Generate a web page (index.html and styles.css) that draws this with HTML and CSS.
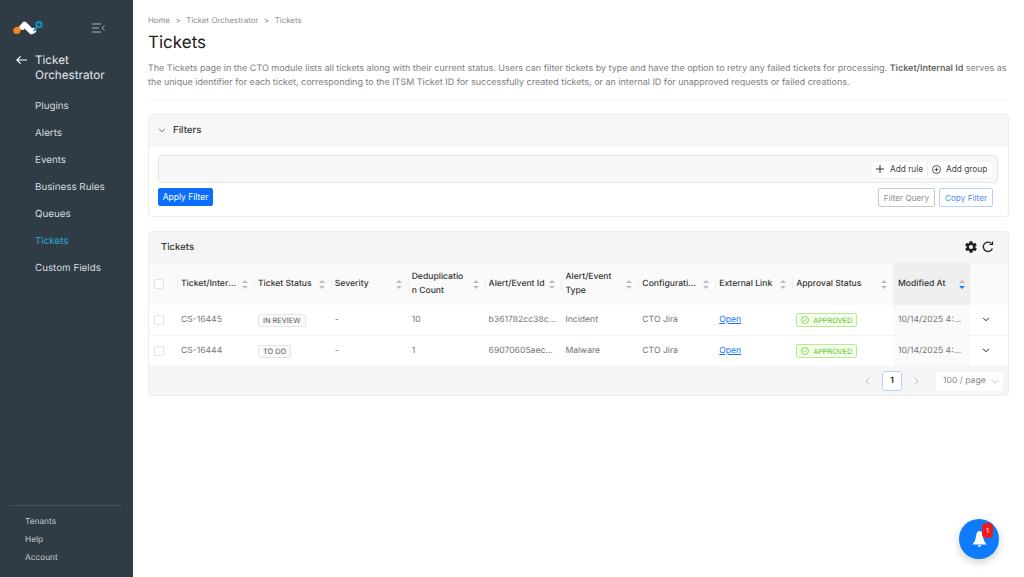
FILE: index.html
```html
<!DOCTYPE html>
<html>
  <head>
    <link rel="stylesheet" href="styles.css">
  </head>
  <body>
    <div class="container">
      <aside class="sidebar">
        <div class="brand">
          <svg class="logo" width="30" height="16" viewBox="0 0 30 16">
            <circle cx="3.800" cy="10.500" r="3.500" fill="#f5861f"/>
            <path d="M3.800 10.500 L8.500 7" stroke="#f5861f" stroke-width="4.500" stroke-linecap="round"/>
            <path d="M9.500 7 L11.500 4.500 L18.500 11.500 L20.500 10.500" fill="none" stroke="#fff" stroke-width="5.500" stroke-linecap="round" stroke-linejoin="round"/>
            <path d="M21 11 L24 7" stroke="#1494c4" stroke-width="2"/>
            <circle cx="26" cy="4.500" r="2.600" fill="none" stroke="#1494c4" stroke-width="2"/>
          </svg>
          <svg class="collapse" width="13" height="10" viewBox="0 0 13 10" fill="none" stroke="#aab2b8" stroke-width="1">
            <path d="M0 1h9M0 5h7M0 9h9M12.500 2.500 10 5l2.500 2.500"/>
          </svg>
        </div>
        <div class="module">
          <svg width="11" height="10" viewBox="0 0 12 10" fill="none" stroke="#fff" stroke-width="1.300">
            <path d="M12 5H1M5 1 1 5l4 4"/>
          </svg>
          <span>Ticket Orchestrator</span>
        </div>
        <nav class="menu">
          <a>Plugins</a>
          <a>Alerts</a>
          <a>Events</a>
          <a>Business Rules</a>
          <a>Queues</a>
          <a class="active">Tickets</a>
          <a>Custom Fields</a>
        </nav>
        <div class="side-bottom">
          <a>Tenants</a>
          <a>Help</a>
          <a>Account</a>
        </div>
      </aside>

      <main class="content">
        <div class="breadcrumb">
          <span>Home</span><i>&gt;</i><span>Ticket Orchestrator</span><i>&gt;</i><span>Tickets</span>
        </div>
        <h1>Tickets</h1>
        <p class="intro">The Tickets page in the CTO module lists all tickets along with their current status. Users can filter tickets by type and have the option to retry any failed tickets for processing. <b>Ticket/Internal Id</b> serves as the unique identifier for each ticket, corresponding to the ITSM Ticket ID for successfully created tickets, or an internal ID for unapproved requests or failed creations.</p>

        <section class="card filters">
          <div class="card-head">
            <svg width="8" height="5" viewBox="0 0 9 6" fill="none" stroke="#555" stroke-width="1"><path d="M1 1l3.500 3.500L8 1"/></svg>
            <span>Filters</span>
          </div>
          <div class="filter-body">
            <div class="builder">
              <div class="builder-actions">
                <button class="add-rule">
                  <svg width="8" height="8" viewBox="0 0 8 8" stroke="#333" stroke-width="1"><path d="M4 0v8M0 4h8"/></svg>
                  Add rule
                </button>
                <button class="add-group">
                  <svg width="9" height="9" viewBox="0 0 9 9" fill="none" stroke="#333" stroke-width="0.800"><circle cx="4.500" cy="4.500" r="4"/><path d="M4.500 2.500v4M2.500 4.500h4"/></svg>
                  Add group
                </button>
              </div>
            </div>
            <div class="filter-row">
              <button class="btn-primary">Apply Filter</button>
              <div class="filter-btns">
                <button class="btn-muted">Filter Query</button>
                <button class="btn-link">Copy Filter</button>
              </div>
            </div>
          </div>
        </section>

        <section class="card tickets">
          <div class="card-head tickets-head">
            <span>Tickets</span>
            <div class="tools">
              <svg width="14" height="14" viewBox="0 0 24 24" fill="#222"><path d="M19.400 13c.1-.3.100-.7.100-1s0-.7-.1-1l2.100-1.600c.2-.2.300-.4.100-.7l-2-3.400c-.1-.2-.4-.3-.6-.2l-2.500 1c-.5-.4-1.100-.7-1.700-1l-.4-2.600c0-.3-.2-.5-.5-.5h-4c-.3 0-.5.200-.5.500l-.4 2.600c-.6.300-1.200.6-1.700 1l-2.500-1c-.2-.1-.5 0-.6.200l-2 3.400c-.2.300-.1.500.1.700L4.600 11c0 .3-.1.700-.1 1s0 .7.100 1l-2.100 1.600c-.2.200-.3.400-.1.700l2 3.400c.1.200.4.300.6.200l2.500-1c.5.400 1.100.7 1.700 1l.4 2.600c0 .3.200.5.500.5h4c.3 0 .5-.2.500-.5l.4-2.600c.6-.3 1.200-.6 1.700-1l2.500 1c.2.100.5 0 .6-.2l2-3.400c.2-.3.100-.5-.1-.7zM12 15.500a3.500 3.500 0 1 1 0-7 3.500 3.500 0 0 1 0 7z"/></svg>
              <svg width="12" height="12" viewBox="0 0 12 12" fill="none" stroke="#222" stroke-width="1.300"><path d="M10.400 7.500A4.700 4.700 0 1 1 9.500 2.600"/><path d="M10.500 .5v3h-3" stroke-width="1.200"/></svg>
            </div>
          </div>
          <table>
            <thead>
              <tr>
                <th class="col-check"><span class="check"></span></th>
                <th><div class="th"><span class="ell">Ticket/Internal Id</span><em class="sort"></em></div></th>
                <th><div class="th"><span class="ell">Ticket Status</span><em class="sort"></em></div></th>
                <th><div class="th"><span>Severity</span><em class="sort"></em></div></th>
                <th><div class="th"><span class="wrap dedup">Deduplication Count</span><em class="sort"></em></div></th>
                <th><div class="th"><span class="ell">Alert/Event Id</span><em class="sort"></em></div></th>
                <th><div class="th"><span class="wrap">Alert/Event Type</span><em class="sort"></em></div></th>
                <th><div class="th"><span class="ell">Configuration Name</span><em class="sort"></em></div></th>
                <th><div class="th"><span class="ell">External Link</span><em class="sort"></em></div></th>
                <th class="col-approval"><div class="th"><span>Approval Status</span><em class="sort"></em></div></th>
                <th class="sorted"><div class="th"><span>Modified At</span><em class="sort desc"></em></div></th>
                <th class="col-expand"></th>
              </tr>
            </thead>
            <tbody>
              <tr>
                <td><span class="check"></span></td>
                <td>CS-16445</td>
                <td><span class="tag">IN REVIEW</span></td>
                <td>-</td>
                <td>10</td>
                <td><div class="ell">b361782cc38c4f1a</div></td>
                <td>Incident</td>
                <td>CTO Jira</td>
                <td><a class="ext">Open</a></td>
                <td>
                  <span class="approved">
                    <svg width="8" height="8" viewBox="0 0 8 8" fill="none" stroke="#52c41a" stroke-width="0.700"><circle cx="4" cy="4" r="3.500"/><path d="M2.300 4.100 3.500 5.200 5.700 2.900"/></svg>
                    APPROVED
                  </span>
                </td>
                <td class="sorted"><div class="ell">10/14/2025 4:32 PM</div></td>
                <td class="col-expand"><svg width="8" height="5" viewBox="0 0 9 6" fill="none" stroke="#222" stroke-width="1.200"><path d="M1 1l3.500 3.500L8 1"/></svg></td>
              </tr>
              <tr>
                <td><span class="check"></span></td>
                <td>CS-16444</td>
                <td><span class="tag">TO DO</span></td>
                <td>-</td>
                <td>1</td>
                <td><div class="ell">69070605aec9d2b1</div></td>
                <td>Malware</td>
                <td>CTO Jira</td>
                <td><a class="ext">Open</a></td>
                <td>
                  <span class="approved">
                    <svg width="8" height="8" viewBox="0 0 8 8" fill="none" stroke="#52c41a" stroke-width="0.700"><circle cx="4" cy="4" r="3.500"/><path d="M2.300 4.100 3.500 5.200 5.700 2.900"/></svg>
                    APPROVED
                  </span>
                </td>
                <td class="sorted"><div class="ell">10/14/2025 4:32 PM</div></td>
                <td class="col-expand"><svg width="8" height="5" viewBox="0 0 9 6" fill="none" stroke="#222" stroke-width="1.200"><path d="M1 1l3.500 3.500L8 1"/></svg></td>
              </tr>
            </tbody>
          </table>
          <div class="pager">
            <svg width="5" height="8" viewBox="0 0 5 8" fill="none" stroke="#bbb" stroke-width="0.900"><path d="M4.500 .5 1 4l3.500 3.500"/></svg>
            <span class="page">1</span>
            <svg width="5" height="8" viewBox="0 0 5 8" fill="none" stroke="#bbb" stroke-width="0.900"><path d="M.5 .5 4 4 .5 7.500"/></svg>
            <span class="size">100 / page
              <svg width="8" height="5" viewBox="0 0 8 5" fill="none" stroke="#bbb" stroke-width="0.800"><path d="M.5 .5 4 4 7.500 .5"/></svg>
            </span>
          </div>
        </section>
      </main>

      <div class="bell">
        <svg width="15" height="18" viewBox="0 0 15 16" fill="#fff"><path d="M7.500 0C5.800 0 5 1.300 4.500 3 3.700 6 3.600 9.500 1.900 11.500.9 12.600.6 13 .6 13.500h13.800c0-.5-.3-.9-1.300-2C11.400 9.500 11.300 6 10.500 3 10 1.300 9.200 0 7.500 0z"/><path d="M5.800 14.300h3.400c-.2 1-.9 1.500-1.700 1.500s-1.500-.5-1.700-1.500z"/></svg>
        <span class="badge">1</span>
      </div>
    </div>
  </body>
</html>
```

FILE: styles.css
```css
* {
  box-sizing: border-box;
}

body {
  margin: 0;
  overflow: hidden;
  background: #fff;
  font-family: Inter, "Liberation Sans", sans-serif;
  color: #222;
  text-rendering: geometricPrecision;
}

.container {
  display: flex;
  height: 100vh;
  position: relative;
}

/* Sidebar */
.sidebar {
  width: 133px;
  flex-shrink: 0;
  background: #2f3c46;
  color: #d7dbde;
  display: flex;
  flex-direction: column;
  padding-top: 20px;
}

.brand {
  display: flex;
  align-items: center;
  justify-content: space-between;
  padding: 0 28px 0 13px;
  height: 16px;
}

.module {
  display: flex;
  gap: 8px;
  padding: 0 14px 0 16px;
  margin-top: 17px;
  font-size: 11.700px;
  line-height: 15px;
  color: #e6e8ea;
}

.module svg {
  flex-shrink: 0;
  margin-top: 2px;
}

.menu {
  display: flex;
  flex-direction: column;
  gap: 13px;
  margin-top: 17px;
  padding-left: 35px;
  font-size: 9.800px;
  line-height: 14px;
}

.menu .active {
  color: #2fa8d8;
}

.side-bottom {
  margin: auto 11px 0 10px;
  border-top: 1px solid #46525b;
  padding: 11px 0 13px 15px;
  display: flex;
  flex-direction: column;
  gap: 7px;
  font-size: 8.300px;
  line-height: 11px;
  color: #c6cbcf;
}

/* Main content */
.content {
  flex: 1;
  min-width: 0;
  padding: 15px 15px 0;
}

.breadcrumb {
  font-size: 7.900px;
  line-height: 11px;
  color: #8c8c8c;
}

.breadcrumb i {
  font-style: normal;
  margin: 0 5.500px;
}

h1 {
  margin: 4px 0 0;
  font-size: 17px;
  line-height: 26px;
  font-weight: 400;
  color: #222;
}

.intro {
  margin: 6px 0 0;
  padding-bottom: 9px;
  border-bottom: 1px solid #f7f7f7;
  font-size: 8.970px;
  line-height: 14px;
  color: #7d7d7d;
}

.intro b {
  font-weight: 600;
  color: #666;
}

.card {
  border: 1px solid #ededed;
  border-radius: 4px;
  overflow: hidden;
}

.card-head {
  display: flex;
  align-items: center;
  gap: 7px;
  height: 31px;
  padding: 0 9px;
  background: #f7f7f7;
  border-bottom: 1px solid #efefef;
  font-size: 9.600px;
  font-weight: 500;
  color: #333;
}

.filters {
  margin-top: 14px;
}

.filter-body {
  padding: 9px 10px 9px 9px;
}

.builder {
  height: 28px;
  background: #f7f7f7;
  border: 1px solid #e6e6e6;
  border-radius: 4px;
  display: flex;
  justify-content: flex-end;
  align-items: center;
  padding-right: 5px;
}

.builder-actions {
  display: flex;
  background: #fff;
  border-radius: 3px;
}

.builder-actions button {
  display: flex;
  align-items: center;
  height: 15px;
  padding: 0;
  border: 0;
  background: none;
  font: 8.300px Inter, sans-serif;
  color: #444;
}

.add-rule {
  width: 55px;
  gap: 6px;
  padding-left: 4px !important;
}

.add-group {
  width: 65px;
  gap: 5px;
  padding-left: 4px !important;
  border-left: 1px solid #eee !important;
}

.filter-row {
  display: flex;
  justify-content: space-between;
  margin-top: 5px;
}

.filter-btns {
  display: flex;
  gap: 4px;
  margin-right: 5px;
}

.filter-row button {
  height: 19px;
  border-radius: 2px;
  padding: 0;
  font: 8.200px Inter, sans-serif;
  background: #fff;
}

.filter-row .btn-primary {
  width: 55px;
  height: 18px;
  background: #0d6efd;
  border: 1px solid #0d6efd;
  color: #fff;
  font-size: 8.500px;
}

.btn-muted {
  width: 57px;
  border: 1px solid #c9c9c9;
  color: #8d8d8d;
}

.btn-link {
  width: 54px;
  border: 1px solid #b5d2fb;
  color: #4c8ff0;
}

.tickets {
  margin-top: 14px;
  background: #f5f5f5;
}

.tickets-head {
  justify-content: space-between;
  padding: 0 14px 0 12px;
  background: #f5f5f5;
  font-size: 9.500px;
}

.tools {
  display: flex;
  align-items: center;
  gap: 4px;
}

/* Table */
table {
  width: 100%;
  border-collapse: separate;
  border-spacing: 0;
  table-layout: fixed;
  font-size: 8.600px;
  background: #fff;
}

th {
  width: 76.900px;
  height: 42px;
  padding: 0 6px 0 4px;
  background: #fafafa linear-gradient(#f0f0f0, #f0f0f0) left center / 1px 14px no-repeat;
  text-align: left;
  font-weight: 500;
  line-height: 14px;
  color: #333;
  font-size: 8.600px;
}

th.col-check {
  width: 28px;
  background: #fafafa;
}

th.col-approval {
  width: 100.800px;
}

th.sorted {
  width: 77px;
  padding-left: 5px;
  padding-right: 5px;
  background: #efefef;
}

th.col-expand {
  width: auto;
  background: #fafafa;
}

td {
  height: 31px;
  padding: 0 4px;
  border-bottom: 1px solid #f5f5f5;
  color: #757575;
}

td.sorted {
  padding-left: 5px;
  background: #fafafa;
}

td.col-expand {
  padding-left: 12px;
}

th:first-child,
td:first-child {
  padding-left: 5px;
}

.th {
  display: flex;
  align-items: center;
  gap: 4px;
}

.th span {
  flex: 1;
  min-width: 0;
}

.th .wrap {
  overflow-wrap: anywhere;
}

.th .dedup {
  padding-right: 3px;
}

.ell {
  white-space: nowrap;
  overflow: hidden;
  text-overflow: ellipsis;
  min-width: 0;
}

.sort {
  flex-shrink: 0;
  width: 6px;
  height: 9px;
  display: flex;
  flex-direction: column;
  justify-content: space-between;
}

.sort::before,
.sort::after {
  content: "";
  border-left: 3px solid transparent;
  border-right: 3px solid transparent;
}

.sort::before {
  border-bottom: 3.500px solid #bdbdbd;
}

.sort::after {
  border-top: 3.500px solid #bdbdbd;
}

.sort.desc::after {
  border-top-color: #1677ff;
}

.check {
  display: block;
  width: 10px;
  height: 10px;
  background: #fff;
  border: 1px solid #e3e3e3;
  border-radius: 2px;
}

.tag {
  display: inline-block;
  padding: 0 4px;
  height: 13px;
  line-height: 11px;
  border: 1px solid #e6e6e6;
  border-radius: 2px;
  background: #fafafa;
  font-size: 7.400px;
  color: #555;
}

.ext {
  color: #1677ff;
  text-decoration: underline;
}

.approved {
  display: inline-flex;
  align-items: center;
  gap: 4px;
  height: 14px;
  padding: 0 4px;
  border: 1px solid #b7eb8f;
  border-radius: 2px;
  background: #f6ffed;
  color: #52c41a;
  font-size: 7.300px;
}

.pager {
  display: flex;
  align-items: center;
  justify-content: flex-end;
  height: 28px;
  padding-right: 5px;
  font-size: 8.600px;
}

.page {
  width: 20px;
  height: 20px;
  margin: 0 12px;
  line-height: 18px;
  text-align: center;
  background: #fff;
  border: 1px solid #b5d2fb;
  border-radius: 3px;
  font-weight: 600;
  color: #222;
}

.size {
  display: flex;
  align-items: center;
  gap: 5px;
  width: 67px;
  height: 19px;
  margin-left: 17px;
  padding-left: 7px;
  background: #fff;
  border-radius: 3px;
  color: #888;
}

/* Notification bell */
.bell {
  position: absolute;
  left: 959px;
  top: 519px;
  width: 40px;
  height: 40px;
  border-radius: 50%;
  background: #0d7bfb;
  box-shadow: 0 3px 8px rgba(0, 0, 0, 0.2);
  display: flex;
  align-items: center;
  justify-content: center;
}

.badge {
  position: absolute;
  top: 4px;
  left: 23px;
  width: 11px;
  height: 15px;
  border-radius: 4px;
  background: #ee1c1c;
  color: #fff;
  font-size: 7px;
  line-height: 15px;
  text-align: center;
}
```
